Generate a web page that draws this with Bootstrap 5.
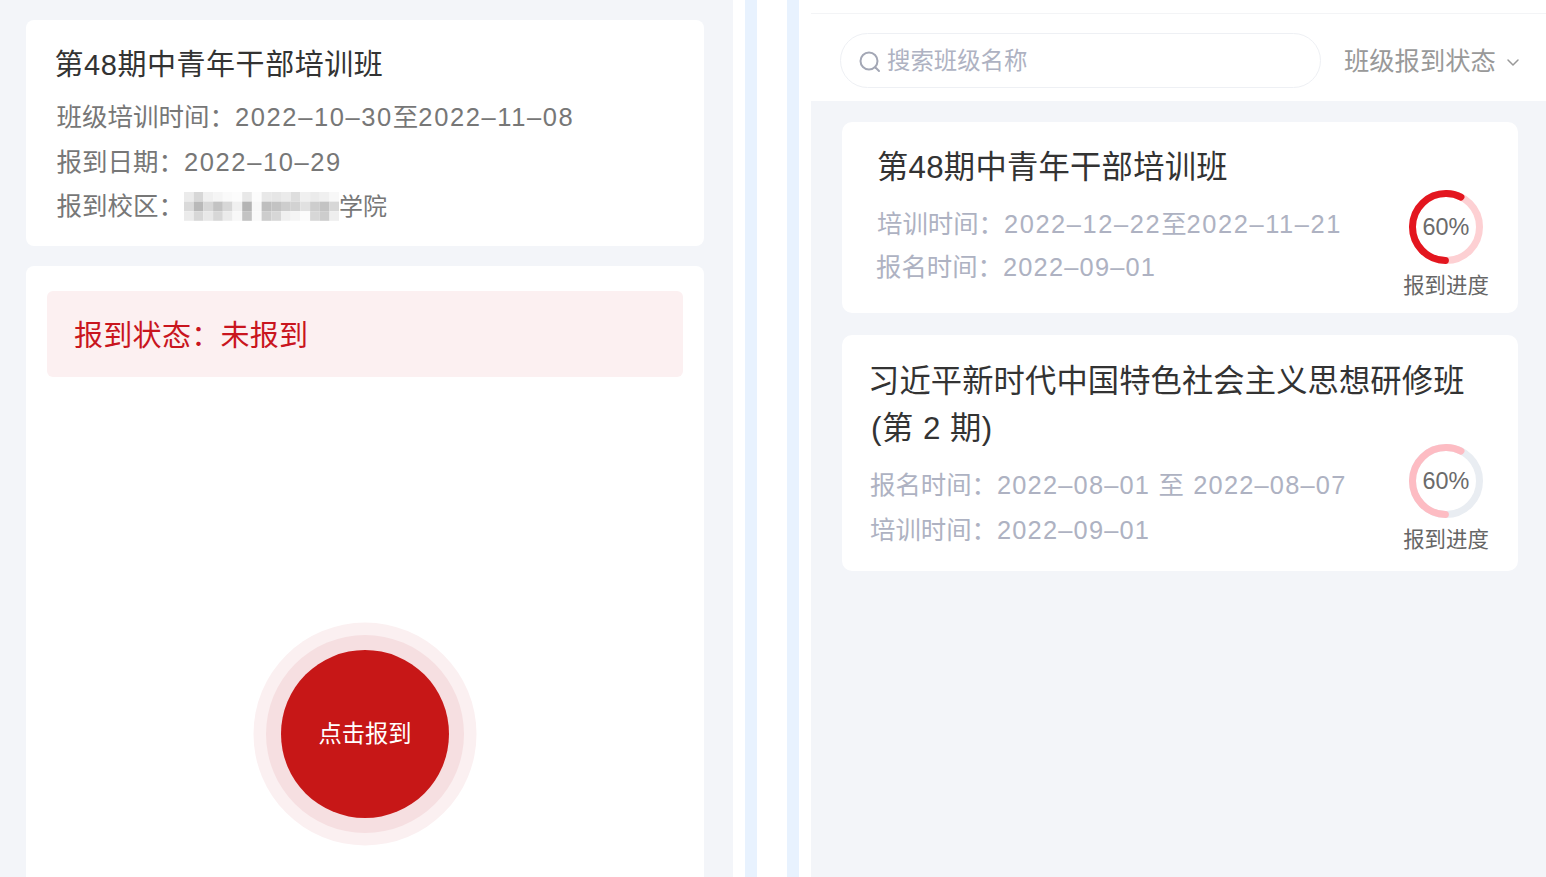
<!DOCTYPE html>
<html lang="zh-CN">
<head>
  <meta charset="UTF-8">
  <meta name="viewport" content="width=device-width, initial-scale=1">
  <title>班级报到</title>
  <link href="https://cdn.jsdelivr.net/npm/bootstrap@5.3.3/dist/css/bootstrap.min.css" rel="stylesheet">
  <style>
    html, body { height: 877px; overflow: hidden; }
    body { font-family: "Liberation Sans", "Noto Sans CJK SC", sans-serif; background: #fff; color: #333; }
    .shell { height: 877px; width: 1546px; }
    .pane-left { width: 733px; background: #f3f5f9; padding: 20px 29px 0 26px; }
    .strip-white { width: 12px; }
    .strip-blue { width: 12px; background: #e8f2fe; }
    .strip-mid { width: 30px; }
    .pane-right { width: 735px; }
    .info-card { background: #fff; border-radius: 8px; }
    .info-head { height: 226px; padding: 27px 28px 0 28.5px; }
    .info-title { font-size: 29px; line-height: 36px; color: #333; letter-spacing: .55px; }
    .info-rows { margin-top: 12px; padding-left: 2px; font-size: 25.5px; line-height: 44.5px; color: #777; }
    .num { letter-spacing: 1.6px; }
    .mosaic { vertical-align: -6px; }
    .college { font-size: 24px; }
    .checkin-card { margin-top: 20px; height: 640px; padding: 25px 21px 0; }
    .status-box { height: 86px; background: #fcf0f1; border-radius: 6px; padding: 5px 0 0 27px; font-size: 29px; letter-spacing: .3px; color: #c9151e; }
    .ring-btn { width: 168px; height: 168px; margin: 273px auto 0; background: #c71717; color: #fff; font-size: 23.3px; box-shadow: 0 0 0 15px #f6dfe1, 0 0 0 27.5px #fbf0f1; }
    .top-line { height: 14px; border-bottom: 1px solid #f3f4f6; }
    .search-row { height: 87px; padding: 19px 0 0 29px; }
    .search-pill { width: 481px; height: 55px; border: 1px solid #eef0f4; border-radius: 28px; padding: 2px 0 0 17px; gap: 5px; font-size: 23.4px; color: #aeb2c2; }
    .state-filter { height: 55px; margin-left: 23px; padding-top: 3px; font-size: 25.3px; color: #999; gap: 10px; }
    .list-pane { background: #f3f5f9; padding: 21px 28px 0 31px; gap: 22px; }
    .class-card { position: relative; background: #fff; border-radius: 10px; }
    .class-a { height: 191px; padding: 22px 0 0 35px; }
    .class-b { height: 236px; padding: 23px 0 0 28px; }
    .class-title { font-size: 31.3px; line-height: 47px; color: #333; }
    .class-a .class-title { letter-spacing: .25px; }
    .class-b .class-title { margin-left: -2px; letter-spacing: .1px; }
    .term-no { margin-left: 3px; letter-spacing: .5px; }
    .class-rows { font-size: 25.4px; color: #aeb2c2; }
    .class-rows .num { letter-spacing: 1.2px; }
    .class-a .class-rows { margin-top: 12px; line-height: 43px; }
    .class-a .class-rows .num-wide { letter-spacing: 1.6px; }
    .class-b .class-rows { margin-top: 11px; line-height: 45px; }
    .shift-left { margin-left: -1px; }
    .progress-box { position: absolute; right: 28px; width: 88px; font-size: 21.4px; color: #666; text-align: center; }
    .class-a .progress-box { top: 67px; }
    .class-b .progress-box { top: 108px; }
    .ring-wrap { position: relative; width: 76px; height: 76px; margin: 0 auto 5px; }
    .ring-wrap span { position: absolute; inset: 0; line-height: 76px; font-size: 23.4px; color: #6b6b6b; }
  </style>
</head>
<body>
  <div class="shell d-flex">
    <div class="pane-left flex-shrink-0">
      <div class="info-card info-head">
        <div class="info-title">第48期中青年干部培训班</div>
        <div class="info-rows">
          <div>班级培训时间：<span class="num">2022–10–30</span>至<span class="num">2022–11–08</span></div>
          <div>报到日期：<span class="num">2022–10–29</span></div>
          <div>报到校区：<svg class="mosaic" id="mosaic" width="155" height="29" viewBox="0 0 155 29"></svg><span class="college">学院</span></div>
        </div>
      </div>
      <div class="info-card checkin-card">
        <div class="status-box d-flex align-items-center">报到状态：未报到</div>
        <div class="ring-btn rounded-circle d-flex align-items-center justify-content-center">点击报到</div>
      </div>
    </div>
    <div class="strip-white"></div>
    <div class="strip-blue"></div>
    <div class="strip-mid"></div>
    <div class="strip-blue"></div>
    <div class="strip-white"></div>
    <div class="pane-right d-flex flex-column">
      <div class="top-line"></div>
      <div class="search-row d-flex">
        <div class="search-pill d-flex align-items-center">
          <svg width="24" height="24" viewBox="0 0 24 24" fill="none" stroke="#a3a7b5" stroke-width="2" stroke-linecap="round"><circle cx="11" cy="11" r="8.5"/><path d="M17.5 17.5l3.5 3.5"/></svg>
          <span>搜索班级名称</span>
        </div>
        <div class="state-filter d-flex align-items-center align-self-start">
          <span>班级报到状态</span>
          <svg width="14" height="14" viewBox="0 0 14 14" fill="none" stroke="#999" stroke-width="1.5" stroke-linecap="round" stroke-linejoin="round"><path d="M2 5l5 5 5-5"/></svg>
        </div>
      </div>
      <div class="list-pane flex-grow-1 d-flex flex-column">
        <div class="class-card class-a">
          <div class="class-title">第48期中青年干部培训班</div>
          <div class="class-rows">
            <div>培训时间：<span class="num num-wide">2022–12–22</span>至<span class="num num-wide">2022–11–21</span></div>
            <div class="shift-left">报名时间：<span class="num">2022–09–01</span></div>
          </div>
          <div class="progress-box">
            <div class="ring-wrap">
              <svg width="76" height="76" viewBox="0 0 76 76" fill="none" stroke-width="7">
                <circle cx="38" cy="38" r="33.5" stroke="#fdd0d3"/>
                <circle cx="38" cy="38" r="33.5" stroke="#e3161f" stroke-dasharray="120 210.5" stroke-linecap="round" transform="rotate(91 38 38)"/>
              </svg>
              <span>60%</span>
            </div>
            报到进度
          </div>
        </div>
        <div class="class-card class-b">
          <div class="class-title">习近平新时代中国特色社会主义思想研修班<br><span class="term-no">(第 2 期)</span></div>
          <div class="class-rows">
            <div>报名时间：<span class="num">2022–08–01 至 2022–08–07</span></div>
            <div>培训时间：<span class="num">2022–09–01</span></div>
          </div>
          <div class="progress-box">
            <div class="ring-wrap">
              <svg width="76" height="76" viewBox="0 0 76 76" fill="none" stroke-width="7">
                <circle cx="38" cy="38" r="33.5" stroke="#e9edf2"/>
                <circle cx="38" cy="38" r="33.5" stroke="#fdbcc3" stroke-dasharray="120 210.5" stroke-linecap="round" transform="rotate(91 38 38)"/>
              </svg>
              <span>60%</span>
            </div>
            报到进度
          </div>
        </div>
      </div>
    </div>
  </div>

  <script src="https://cdn.jsdelivr.net/npm/bootstrap@5.3.3/dist/js/bootstrap.bundle.min.js"></script>
  <script>
    // blurred campus name, one greyscale value per block
    const blocks = [
      [235,215,240,245,250,252,232,252,232,230,235,222,240,235,240,248],
      [218,185,215,195,215,240,180,248,190,195,205,210,225,205,195,215],
      [235,215,232,215,235,248,195,250,205,215,240,245,252,215,205,238]
    ];
    const svg = document.getElementById('mosaic');
    blocks.forEach((row, y) => row.forEach((v, x) => {
      const r = document.createElementNS('http://www.w3.org/2000/svg', 'rect');
      r.setAttribute('x', x * 9.7);
      r.setAttribute('y', y * 9.6);
      r.setAttribute('width', 9.7);
      r.setAttribute('height', 9.6);
      r.setAttribute('fill', `rgb(${v},${v},${v})`);
      svg.appendChild(r);
    }));
  </script>
</body>
</html>
